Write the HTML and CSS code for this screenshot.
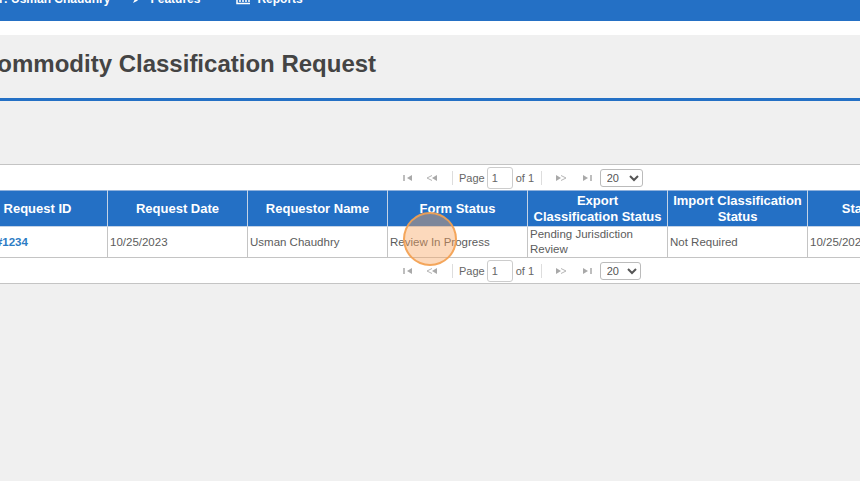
FILE: index.html
```html
<!DOCTYPE html>
<html lang="en">
<head>
<meta charset="utf-8">
<title>Commodity Classification Request</title>
<link rel="stylesheet" href="styles.css">
</head>
<body>
<header class="navbar">
  <span class="nav-item nav-user">User: Usman Chaudhry</span>
  <span class="nav-item nav-features">
    <svg class="nav-icon" width="12" height="12" viewBox="0 0 12 12"><path d="M2 10 L4 6 L9 1 L11 3 L6 8 Z" fill="#fff"/></svg>
    Features
  </span>
  <span class="nav-item nav-reports">
    <svg class="nav-icon" width="14" height="12" viewBox="0 0 14 12"><path d="M1 2V10.500H14M4 9V5M7 9V3M10 9V6M13 9V4" stroke="#fff" stroke-width="1.500" fill="none"/></svg>
    Reports
  </span>
</header>
<div class="band"></div>
<main class="content">
  <div class="title-bar">
    <h1 class="title">Commodity Classification Request</h1>
  </div>
  <section class="panel">
    <div class="pager pager-top">
      <svg class="pg-icon" width="10" height="8" viewBox="0 0 10 8"><path d="M1 1V7" stroke="#a9a9a9" stroke-width="1.500"/><path d="M9 1V7L4 4Z" fill="#a9a9a9"/></svg>
      <svg class="pg-icon pg-prev" width="12" height="8" viewBox="0 0 12 8"><path d="M6 1.500L1 4L6 6.500" stroke="#b5b5b5" fill="none"/><path d="M11 1V7L6 4Z" fill="#a9a9a9"/></svg>
      <span class="pg-sep pg-sep-a"></span>
      <span class="pg-label">Page</span>
      <input class="pg-input" value="1" aria-label="Page">
      <span class="pg-label pg-of">of 1</span>
      <span class="pg-sep pg-sep-b"></span>
      <svg class="pg-icon pg-next" width="12" height="8" viewBox="0 0 12 8"><path d="M1 1V7L6 4Z" fill="#a9a9a9"/><path d="M6 1.500L11 4L6 6.500" stroke="#b5b5b5" fill="none"/></svg>
      <svg class="pg-icon pg-last" width="10" height="8" viewBox="0 0 10 8"><path d="M1 1V7L6 4Z" fill="#a9a9a9"/><path d="M9 1V7" stroke="#a9a9a9" stroke-width="1.500"/></svg>
      <select class="pg-select" aria-label="Rows"><option>20</option></select>
    </div>
    <table class="grid">
      <colgroup><col class="c"><col class="c"><col class="c"><col class="c"><col class="c"><col class="c"><col class="c"></colgroup>
      <thead>
        <tr>
          <th>Request ID</th>
          <th>Request Date</th>
          <th>Requestor Name</th>
          <th>Form Status</th>
          <th>Export<br>Classification Status</th>
          <th>Import Classification Status</th>
          <th>Status Date</th>
        </tr>
      </thead>
      <tbody>
        <tr>
          <td class="td-id"><a href="#">CCR#1234</a></td>
          <td>10/25/2023</td>
          <td>Usman Chaudhry</td>
          <td>Review In Progress</td>
          <td>Pending Jurisdiction Review</td>
          <td>Not Required</td>
          <td>10/25/2023</td>
        </tr>
      </tbody>
    </table>
    <div class="pager pager-bottom">
      <svg class="pg-icon" width="10" height="8" viewBox="0 0 10 8"><path d="M1 1V7" stroke="#a9a9a9" stroke-width="1.500"/><path d="M9 1V7L4 4Z" fill="#a9a9a9"/></svg>
      <svg class="pg-icon pg-prev" width="12" height="8" viewBox="0 0 12 8"><path d="M6 1.500L1 4L6 6.500" stroke="#b5b5b5" fill="none"/><path d="M11 1V7L6 4Z" fill="#a9a9a9"/></svg>
      <span class="pg-sep pg-sep-a"></span>
      <span class="pg-label">Page</span>
      <input class="pg-input" value="1" aria-label="Page">
      <span class="pg-label pg-of">of 1</span>
      <span class="pg-sep pg-sep-b"></span>
      <svg class="pg-icon pg-next" width="12" height="8" viewBox="0 0 12 8"><path d="M1 1V7L6 4Z" fill="#a9a9a9"/><path d="M6 1.500L11 4L6 6.500" stroke="#b5b5b5" fill="none"/></svg>
      <svg class="pg-icon pg-last" width="10" height="8" viewBox="0 0 10 8"><path d="M1 1V7L6 4Z" fill="#a9a9a9"/><path d="M9 1V7" stroke="#a9a9a9" stroke-width="1.500"/></svg>
      <select class="pg-select pg-select-b" aria-label="Rows"><option>20</option></select>
    </div>
  </section>
</main>
<div class="click-ring"></div>
</body>
</html>
```
FILE: styles.css
```css
* { box-sizing: border-box; }
html, body { margin: 0; height: 100%; overflow: hidden; }
body {
  position: relative;
  width: 860px;
  height: 481px;
  background: #f0f0f0;
  font-family: "Liberation Sans", Arial, sans-serif;
  color: #555;
}
.navbar {
  height: 21px;
  background: #2470c5;
  display: flex;
  align-items: flex-end;
  padding-bottom: 15px;
  overflow: hidden;
  color: #fff;
  font-weight: 700;
  font-size: 12px;
  line-height: 14px;
}
.nav-item { display: flex; align-items: center; flex: none; white-space: nowrap; }
.nav-user { margin-left: -23px; }
.nav-features { margin-left: 21px; }
.nav-reports { margin-left: 36px; }
.nav-icon { margin-right: 7px; }
.band { height: 14px; background: #fff; }
.content { background: #f0f0f0; }
.title-bar {
  height: 66px;
  border-bottom: 3px solid #2470c5;
  display: flex;
  align-items: center;
  overflow: hidden;
  padding-bottom: 6px;
}
.title {
  margin: 0 0 0 -20px;
  font-size: 24px;
  line-height: 30px;
  font-weight: 700;
  color: #444;
  white-space: nowrap;
}
.panel {
  margin-top: 63px;
  background: #fff;
  border-top: 1px solid #c4c4c4;
  border-bottom: 1px solid #c4c4c4;
  height: 120px;
  overflow: hidden;
}
.pager {
  display: flex;
  align-items: center;
  height: 25px;
  font-size: 11px;
  color: #666;
  padding-left: 403px;
}
.pg-icon { flex: none; }
.pg-prev { margin-left: 13px; }
.pg-sep { width: 1px; height: 14px; background: #ddd; flex: none; }
.pg-sep-a { margin-left: 14px; margin-right: 6px; }
.pg-input {
  width: 26px;
  height: 22px;
  margin: 0 3px 0 2px;
  padding: 0 4px;
  border: 1px solid #ccc;
  border-radius: 3px;
  font: 11px "Liberation Sans", Arial, sans-serif;
  color: #666;
  background: #fff;
}
.pg-of { width: 18px; white-space: nowrap; }
.pg-sep-b { margin-left: 7px; }
.pg-next { margin-left: 13px; }
.pg-last { margin-left: 15px; }
.pg-select {
  width: 43px;
  height: 18px;
  margin-left: 8px;
  padding: 0 0 0 2px;
  border: 1px solid #bbb;
  border-radius: 3px;
  background: #fff;
  font: 11px "Liberation Sans", Arial, sans-serif;
  color: #555;
}
.pg-select-b { width: 41px; }
.grid {
  border-collapse: collapse;
  table-layout: fixed;
  width: 980px;
  margin-left: -33px;
}
.c { width: 140px; }
.grid th {
  height: 36px;
  padding: 0 2px;
  background: #2470c5;
  color: #fff;
  font-size: 13px;
  line-height: 16px;
  font-weight: 700;
  text-align: center;
  border: 1px solid #c4d3e6;
  border-top-color: #8fb1dc;
}
.grid td {
  height: 31px;
  padding: 0 2px;
  font-size: 11.5px;
  line-height: 15px;
  color: #5c5c5c;
  border: 1px solid #c4c4c4;
  text-align: left;
  vertical-align: middle;
}
.grid .td-id { padding-left: 3px; }
.grid td a { color: #2c7cc4; font-weight: 700; text-decoration: none; }
.click-ring {
  position: absolute;
  left: 403px;
  top: 212px;
  width: 54px;
  height: 54px;
  border-radius: 50%;
  border: 2px solid rgba(243, 160, 80, 0.9);
  background: rgba(248, 165, 95, 0.42);
}
```
